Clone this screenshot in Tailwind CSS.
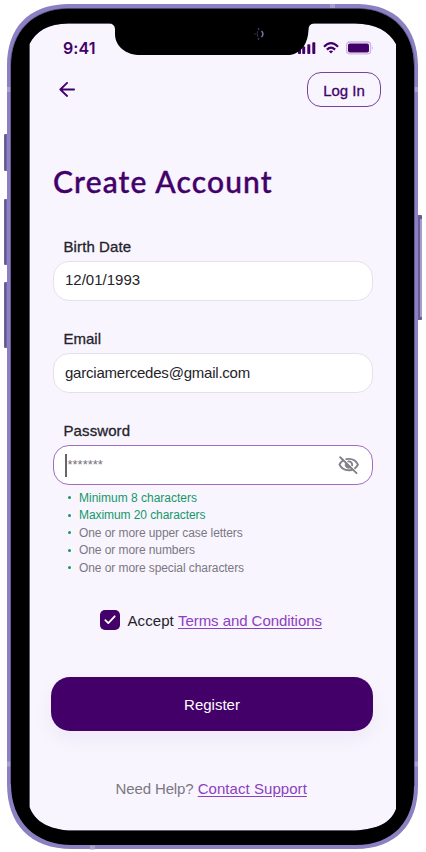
<!DOCTYPE html>
<html lang="en">
<head>
<meta charset="utf-8">
<title>Create Account</title>
<script src="https://cdn.jsdelivr.net/npm/@tailwindcss/browser@4"></script>
</head>
<body class="bg-white">
<main class="relative isolate w-[426px] h-[852px] overflow-hidden font-['Liberation_Sans',sans-serif] text-[15px] text-[#252329]">
  <!-- Side buttons and screen background -->
  <svg class="absolute inset-0 -z-10" width="426" height="852" viewBox="0 0 426 852">
    <g fill="#756aa8"><rect x="4" y="134" width="5" height="37" rx="1"/><rect x="4" y="199" width="5" height="66" rx="1"/><rect x="4" y="282" width="5" height="66" rx="1"/></g>
    <path d="M5.2 135v35M5.2 200v64M5.2 283v64" stroke="#584f86" stroke-width="1"/>
    <rect x="417" y="215" width="5" height="105" rx="1" fill="#665c94"/><rect x="420" y="219" width="2" height="98" fill="#a79bd0"/>
    <rect x="26" y="20" width="374" height="814" rx="22" fill="#f8f5ff"/>
  </svg>

  <div class="flex flex-col pl-[53px] pr-[53px] pt-[38px]">
    <header class="-mr-[6px] flex h-5 items-center justify-between pl-[10px]">
      <span class="font-['Inter',sans-serif] text-[16px] leading-5 font-semibold tracking-[0.1px] text-[#430069]">9:41</span>
      <svg width="82" height="20" viewBox="0 0 82 20" fill="#430069" class="shrink-0">
        <rect x="1" y="11" width="3" height="5" rx=".8"/><rect x="5.2" y="8.5" width="3" height="7.5" rx=".8"/><rect x="10.3" y="6.3" width="3" height="9.7" rx=".8"/><rect x="15.3" y="4.3" width="3" height="11.7" rx=".8"/>
        <g transform="translate(26 0)" fill="none" stroke="#430069" stroke-width="2.2"><path d="M1 8.8Q8 1.6 15 8.8"/><path d="M3.9 11.6Q8 7.5 12.1 11.6"/><path d="M8 15.5L5.8 13.3Q8 11.5 10.2 13.3Z" fill="#430069" stroke="none"/></g>
        <rect x="49.600" y="4" width="24" height="11.8" rx="3.2" fill="#f8f5ff" stroke="#cbb6dc" stroke-width="1.3"/>
        <rect x="51" y="5.500" width="21" height="9" rx="1.800"/><path d="M75.200 8.300q1.600 1.600 0 3.500z" fill="#bfa7d2"/>
      </svg>
    </header>

    <nav class="mt-[14px] -mr-[8px] flex h-[35px] items-center justify-between pl-[6px]">
      <svg width="18" height="16" viewBox="0 0 18 16" fill="none" stroke="#430069" stroke-width="1.8" stroke-linecap="round" stroke-linejoin="round"><path d="M15.100 7.500H1.300M8.100 .9L1.300 7.500l6.800 6.500"/></svg>
      <button class="flex h-[35px] w-[74px] items-center justify-center rounded-[14px] border border-[#754398] pt-[3px] text-[15px] text-[#430069] [-webkit-text-stroke:0.3px]">Log In</button>
    </nav>

    <h1 class="mt-[54px] h-10 whitespace-nowrap font-['Lato',sans-serif] text-[30px] leading-10 font-medium tracking-[1.15px] text-[#430069] [-webkit-text-stroke:0.4px]">Create Account</h1>

    <form class="flex flex-col">
      <label class="mt-[36px] flex h-5 items-center pl-[10.5px] [-webkit-text-stroke:0.3px]"><span class="tracking-[0.1px]">Birth Date</span></label>
      <div class="mt-[4px] flex h-10 items-center rounded-[16px] border border-[#e5e1e9] bg-white pl-[11px]"><span class="-mt-px">12/01/1993</span></div>

      <label class="mt-[28px] flex h-5 items-center pl-[10.5px] [-webkit-text-stroke:0.3px]">Email</label>
      <div class="mt-[4px] flex h-10 items-center rounded-[16px] border border-[#e5e1e9] bg-white pl-[11px]"><span class="tracking-[-0.22px]">garciamercedes@gmail.com</span></div>

      <label class="mt-[28px] flex h-5 items-center pl-[10.5px] [-webkit-text-stroke:0.3px]"><span class="tracking-[0.1px]">Password</span></label>
      <div class="mt-[4px] flex h-10 items-center rounded-[16px] border border-[#a36bc2] bg-white pr-3 pl-[11px]">
        <span class="h-[23px] w-[1.5px] bg-[#67656b]"></span>
        <span class="h-5 pl-[1px] text-[13px] leading-5 text-[#747279]">*******</span>
        <svg class="ml-auto" width="22" height="20" viewBox="0 0 22 20" fill="none" stroke="#828087" stroke-width="1.9" stroke-linecap="round">
          <path d="M5.3 5.2C3.5 6.3 2.2 8 1.5 9.7c1.7 3.6 5.1 5.6 9.2 5.6 1.2 0 2.400-.2 3.400-.5M8.200 4.100c.8-.2 1.700-.2 2.500-.2 4 0 7.600 2.100 9.200 5.800-.7 1.500-1.600 2.700-2.900 3.600"/>
          <path d="M7.600 8.100c-1.300 2.700.5 5.200 3.200 5.200.7 0 1.300-.2 1.800-.5z" fill="#828087" stroke-width=".8"/>
          <path d="M10.300 6.400c2.400-.1 4 1.500 3.900 3.800M2.200 2.200L18.500 18.100"/>
        </svg>
      </div>

      <ul class="mt-[4px] flex flex-col pl-[15px] text-[12px] tracking-[-0.08px] text-[#7b787f]">
        <li class="flex h-[17.5px] items-center gap-[8px] text-[#149868]"><i class="size-[3px] rounded-full bg-[#149868]"></i><span class="tracking-normal">Minimum 8 characters</span></li>
        <li class="flex h-[17.5px] items-center gap-[8px] text-[#149868]"><i class="size-[3px] rounded-full bg-[#149868]"></i><span>Maximum 20 characters</span></li>
        <li class="flex h-[17.5px] items-center gap-[8px]"><i class="size-[3px] rounded-full bg-[#149868]"></i><span>One or more upper case letters</span></li>
        <li class="flex h-[17.5px] items-center gap-[8px]"><i class="size-[3px] rounded-full bg-[#149868]"></i><span>One or more numbers</span></li>
        <li class="flex h-[17.5px] items-center gap-[8px]"><i class="size-[3px] rounded-full bg-[#149868]"></i><span>One or more special characters</span></li>
      </ul>

      <div class="mt-[33px] flex h-5 items-center pl-[47px]">
        <span class="flex size-5 items-center justify-center rounded-[5px] bg-[#430069]"><svg width="12" height="10" viewBox="0 0 12 10" fill="none" stroke="#fff" stroke-width="1.8" stroke-linecap="round" stroke-linejoin="round"><path d="M1.3 5.1l3 3L10.7 1.3"/></svg></span>
        <span class="pt-[3px] pl-[7.5px] whitespace-nowrap"><span class="tracking-[0.08px]">Accept</span> <a class="tracking-[-0.06px] text-[#8c3fc0] underline decoration-1 underline-offset-[2px]">Terms and Conditions</a></span>
      </div>

      <button type="button" class="mt-[47px] -ml-[2px] flex h-[54px] items-center justify-center rounded-[19px] bg-[#430069] pt-[3px] text-[15px] text-white shadow-[0_8px_20px_rgba(60,20,60,0.05)]">Register</button>
    </form>

    <p class="mt-[48px] h-5 pl-[62.5px] leading-5 whitespace-nowrap text-[#7b787f]"><span class="tracking-[-0.12px]">Need Help?</span> <a class="tracking-[0.05px] text-[#8c3fc0] underline decoration-1 underline-offset-[2px]">Contact Support</a></p>
  </div>

  <!-- Phone bezel with notch -->
  <svg class="pointer-events-none absolute inset-0" width="426" height="852" viewBox="0 0 426 852">
    <path fill="#8d80c2" fill-rule="evenodd" d="M67 4H359C396 5 418 28 418 66V786C418 824 396 849 356 849H72C30 849 7 824 7 784V66C7 28 28 5 67 4ZM29.5 44V807C35 822 49 829 69 830.5H355C377 829 390 824 396 809V44C389 31 376 24 355 23.5H68C48 24 36 31 29.5 44Z"/>
    <path fill="#000" fill-rule="evenodd" d="M67 8.5H359C393 9.5 414 32 414 66V786C414 821 393 845 356 845H72C35 845 11 821 11 784V66C11 32 32 9.5 67 8.5ZM29.5 44V807C35 822 49 829 69 830.5H355C377 829 390 824 396 809V44C389 31 376 24 355 23.5H314Q308.500 23.500 308.500 30C308 43 302 53 290 55H138C124 54 115 45 115 34V29Q114.500 23.500 109 23.500H68C48 24 36 31 29.5 44Z"/>
    <path d="M7 89.500h4M7 764h4M332.500 4v4M414 89.500h4M414 764h4M92.500 845.500v4" stroke="#aaa0d0" stroke-width="5"/>
    <path d="M10.500 784V66C10.500 32 32 9 67 8.500H359C393 9 414.500 32 414.500 66V786" fill="none" stroke="#4d4474" stroke-width=".6"/>
    <path d="M258.500 28v2M258.500 38v2M254.500 34h1" stroke="#39375b" stroke-width="1.500"/>
    <path d="M261.500 31q3 3 0 6" fill="none" stroke="#8580b8" stroke-width="1.300"/><path d="M258 31q-2 3 0 6" fill="none" stroke="#30304f"/>
  </svg>
</main>
</body>
</html>
